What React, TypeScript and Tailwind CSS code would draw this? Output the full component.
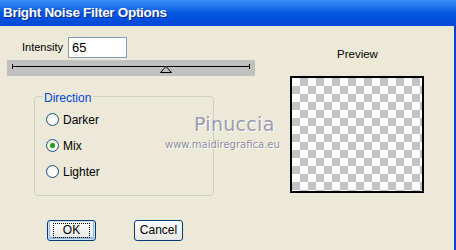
import React from "react";

const font = { fontFamily: '"Liberation Sans", Arial, sans-serif' };

function Radio({ label, checked }: { label: string; checked?: boolean }) {
  return (
    <label className="flex items-center gap-[4px] text-[12px] text-black h-[13px]">
      <span className="relative w-[13px] h-[13px] rounded-full border border-[#1c5180] bg-[radial-gradient(circle_at_60%_60%,#ffffff_30%,#dcdcd6_100%)] flex items-center justify-center">
        {checked && <span className="w-[5px] h-[5px] rounded-full bg-[#21a121] shadow-[0_0_1px_#5fcf5f]" />}
      </span>
      {label}
    </label>
  );
}

function XpButton({ label, focused }: { label: string; focused?: boolean }) {
  return (
    <button
      className={`w-[49px] h-[21px] rounded-[3px] border border-[#003c74] bg-gradient-to-b from-white to-[#e6e6e0] text-[12px] text-black flex items-center justify-center ${
        focused ? "shadow-[inset_0_0_0_1px_#cee7ff,inset_0_-1px_0_2px_#98b8ea]" : ""
      }`}
    >
      <span className={focused ? "border border-dotted border-black px-[9px] leading-[13px]" : "leading-[13px]"}>
        {label}
      </span>
    </button>
  );
}

export default function App() {
  return (
    <div className="w-[456px] h-[250px] overflow-hidden flex flex-col bg-[#ece9d8] relative" style={font}>
      <div className="h-[26px] shrink-0 bg-gradient-to-b from-[#3d8ef6] via-[#0457e3] to-[#0449d6] flex items-center pl-[3px]">
        <span className="text-white font-bold text-[13.5px] tracking-[-0.3px] [text-shadow:1px_1px_0_#0a2a8a]">
          Bright Noise Filter Options
        </span>
      </div>
      <div className="flex flex-1 border-r-[2px] border-[#0843d0]">
        <div className="w-[290px] flex flex-col">
          <div className="flex items-center mt-[11px] ml-[22px] gap-[5px]">
            <span className="text-[11px] text-black">Intensity</span>
            <div className="w-[59px] h-[21px] bg-white border border-[#7f9db9] text-[13px] text-black pl-[3px] flex items-center">
              65
            </div>
          </div>
          <div className="mt-[2px] ml-[7px] w-[248px] h-[16px] bg-[#c0c0c0] relative">
            <div className="absolute left-[5px] right-[5px] top-[6px] h-[1px] bg-black" />
            <div className="absolute left-[5px] top-[4px] w-[1px] h-[5px] bg-black" />
            <div className="absolute right-[5px] top-[4px] w-[1px] h-[5px] bg-black" />
            <svg className="absolute left-[153px] top-[6px]" width="12" height="7" viewBox="0 0 12 7">
              <polygon points="6,0.5 11.5,6.5 0.5,6.5" fill="#c0c0c0" stroke="#000" strokeWidth="1" />
            </svg>
          </div>
          <div className="mt-[20px] ml-[34px] w-[180px] h-[100px] border border-[#d0d0bf] rounded-[4px] relative flex flex-col gap-[13px] pt-[16px] pl-[11px]">
            <span className="absolute left-[7px] top-[-8px] px-[2px] bg-[#ece9d8] text-[12px] text-[#0046d5]">
              Direction
            </span>
            <Radio label="Darker" />
            <Radio label="Mix" checked />
            <Radio label="Lighter" />
          </div>
          <div className="flex mt-[24px] ml-[47px] gap-[38px]">
            <XpButton label="OK" focused />
            <XpButton label="Cancel" />
          </div>
        </div>
        <div className="flex flex-col items-start">
          <span className="mt-[20px] ml-[47px] text-[11.5px] text-black">Preview</span>
          <div className="mt-[13px] w-[134px] h-[117px] border-[2px] border-black bg-white bg-[linear-gradient(45deg,#c3c3c3_25%,transparent_25%,transparent_75%,#c3c3c3_75%),linear-gradient(45deg,#c3c3c3_25%,transparent_25%,transparent_75%,#c3c3c3_75%)] bg-[length:16px_16px] bg-[position:0_0,8px_8px]" />
        </div>
      </div>
      <div className="absolute left-[165px] top-[110px] flex flex-col items-start pointer-events-none">
        <span className="ml-[29px] text-[19px] tracking-[0.3px] text-[#9a9aae] [text-shadow:1px_1px_0_#ffffff]" style={{ fontFamily: '"DejaVu Sans", sans-serif' }}>
          Pinuccia
        </span>
        <span className="text-[10px] tracking-[0px] text-[#8c8ca0] [text-shadow:1px_1px_0_#ffffff] -mt-[2px]" style={{ fontFamily: '"DejaVu Sans", sans-serif' }}>
          www.maidiregrafica.eu
        </span>
      </div>
    </div>
  );
}
